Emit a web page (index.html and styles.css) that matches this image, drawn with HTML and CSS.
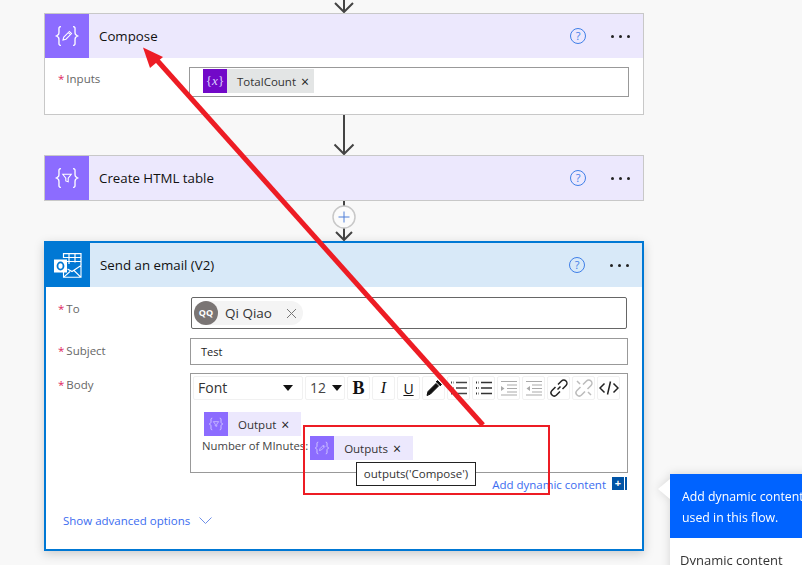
FILE: index.html
```html
<!DOCTYPE html>
<html lang="en">

<head>
    <meta charset="UTF-8">
    <meta name="viewport" content="width=device-width, initial-scale=1.0">
    <title>Flow editor</title>
    <link rel="stylesheet" href="styles.css">
</head>

<body>
    <svg class="defs" width="0" height="0">
        <symbol id="braces" viewBox="0 0 24 24">
            <path d="M7.500 5C5.500 5 6 6.500 6 8.500S6 11 4 12C6 13 6 13.500 6 15.500S5.500 19 7.500 19M16.500 5C18.500 5 18 6.500 18 8.500S18 11 20 12C18 13 18 13.500 18 15.500S18.500 19 16.500 19" fill="none" stroke="currentColor" stroke-width="1" />
        </symbol>
        <symbol id="pencil" viewBox="0 0 24 24">
            <path d="M9 15L9.600 12.800L13.800 8.600L15.400 10.200L11.200 14.400ZM13 9.400L14.600 11" fill="none" stroke="currentColor" stroke-width="0.800" />
        </symbol>
        <symbol id="funnel" viewBox="0 0 24 24">
            <path d="M8.800 9.200H15.200L12.900 12.200V14.800L11.100 14.200V12.200Z" fill="none" stroke="currentColor" stroke-width="0.800" />
        </symbol>
    </svg>

    <main class="flow">
        <svg class="link link-top" width="24" height="13" viewBox="0 0 24 13">
            <path d="M12 0V12M3 3L12 12L21 3" fill="none" stroke="#444" stroke-width="2" />
        </svg>

        <section class="step step-data">
            <header class="step-head">
                <div class="step-icon">
                    <svg width="32" height="32"><use href="#braces" /><use href="#pencil" /></svg>
                </div>
                <span class="step-title">Compose</span>
                <span class="help">?</span>
                <span class="more"><i></i><i></i><i></i></span>
            </header>
            <div class="step-body compose-body">
                <label class="field-label"><b>*</b>Inputs</label>
                <div class="inputs-box">
                    <span class="token token-var">
                        <span class="token-icon var-icon">{<em>x</em>}</span>
                        <span class="token-text">TotalCount</span>
                        <span class="token-x">&times;</span>
                    </span>
                </div>
            </div>
        </section>

        <svg class="link" width="24" height="40" viewBox="0 0 24 40">
            <path d="M12 0V39M2.500 29.500L12 39L21.500 29.500" fill="none" stroke="#444" stroke-width="2" />
        </svg>

        <section class="step step-data">
            <header class="step-head">
                <div class="step-icon">
                    <svg width="32" height="32"><use href="#braces" /><use href="#funnel" /></svg>
                </div>
                <span class="step-title">Create HTML table</span>
                <span class="help">?</span>
                <span class="more"><i></i><i></i><i></i></span>
            </header>
        </section>

        <svg class="link" width="26" height="40" viewBox="0 0 26 40">
            <path d="M13 0V39M5 31L13 39L21 31" fill="none" stroke="#444" stroke-width="2" />
            <circle cx="13" cy="16" r="11" fill="#fbfbfb" stroke="#c8c8c8" stroke-width="1.500" />
            <path d="M13 10.500V21.500M7.500 16H18.500" stroke="#4f7fd8" stroke-width="1" />
        </svg>

        <section class="step step-mail">
            <header class="step-head">
                <div class="step-icon">
                    <svg width="28" height="25" viewBox="0 0 28 25" fill="none" stroke="#fff">
                        <path d="M9.500 5V0.700H27V12M15 0.700V11M21 0.700V9.500M9.500 4.500H27M9.500 8.500H27" stroke-width="1.200" />
                        <path d="M9.500 19V24.300H27V12.500L18 18.500L13.500 16M9.500 24.300L16 18.500M27 24.300L20 17.500" stroke-width="1.100" />
                        <rect x="0" y="6.500" width="13" height="13" fill="#fff" stroke="none" />
                        <ellipse cx="6.500" cy="13" rx="3" ry="3.600" stroke="#0078d4" stroke-width="1.800" />
                    </svg>
                </div>
                <span class="step-title">Send an email (V2)</span>
                <span class="help">?</span>
                <span class="more"><i></i><i></i><i></i></span>
            </header>
            <div class="step-body mail-body">
                <div class="row row-to">
                    <label class="field-label"><b>*</b>To</label>
                    <div class="to-box">
                        <span class="person">
                            <span class="avatar">QQ</span>
                            <span class="person-name">Qi Qiao</span>
                            <svg width="11" height="11" viewBox="0 0 11 11"><path d="M1 1L10 10M10 1L1 10" stroke="#777" stroke-width="1" /></svg>
                        </span>
                    </div>
                </div>
                <div class="row row-subject">
                    <label class="field-label"><b>*</b>Subject</label>
                    <div class="subject-box">Test</div>
                </div>
                <div class="row row-body">
                    <label class="field-label"><b>*</b>Body</label>
                    <div class="editor">
                        <div class="toolbar">
                            <span class="tool select-font"><span class="select-text">Font</span><i class="caret"></i></span>
                            <span class="tool select-size"><span class="select-text">12</span><i class="caret"></i></span>
                            <span class="tool tool-b">B</span>
                            <span class="tool tool-i">I</span>
                            <span class="tool tool-u">U</span>
                            <span class="tool">
                                <svg width="18" height="18" viewBox="0 0 18 18"><path d="M2 16.500L3 12.500L11 4.500L13.500 7L5.500 15ZM11 3L12.500 1.500L16.500 5.500L15 7" fill="#111" stroke="#111" /></svg>
                            </span>
                            <span class="tool">
                                <svg width="18" height="18" viewBox="0 0 18 18"><path d="M6 3.500H17M6 9H17M6 14.500H17" stroke="#444" stroke-width="1.500" /><path d="M1 3.500H3.500M1 9H3.500M1 14.500H3.500" stroke="#444" stroke-width="2" stroke-dasharray="1 1" /></svg>
                            </span>
                            <span class="tool">
                                <svg width="18" height="18" viewBox="0 0 18 18"><path d="M6 3.500H17M6 9H17M6 14.500H17" stroke="#333" stroke-width="1.500" /><path d="M1 3.500H3.500M1 9H3.500M1 14.500H3.500" stroke="#333" stroke-width="2" stroke-dasharray="1 1" /></svg>
                            </span>
                            <span class="tool">
                                <svg width="18" height="18" viewBox="0 0 18 18"><path d="M1 2.500H17M7 6H17M7 9.500H17M7 13H17M1 16H17" stroke="#aaa" stroke-width="1.200" /><path d="M1 7L4.500 9.500L1 12Z" fill="#aaa" /></svg>
                            </span>
                            <span class="tool">
                                <svg width="18" height="18" viewBox="0 0 18 18"><path d="M1 2.500H17M7 6H17M7 9.500H17M7 13H17M1 16H17" stroke="#aaa" stroke-width="1.200" /><path d="M5 7L1.500 9.500L5 12Z" fill="#aaa" /></svg>
                            </span>
                            <span class="tool">
                                <svg width="20" height="20" viewBox="0 0 20 20"><path d="M8.500 11.500L11.500 8.500M9 6.500L12.500 3A3 3 0 0 1 17 7.500L13.500 11M11 13.500L7.500 17A3 3 0 0 1 3 12.500L6.500 9" fill="none" stroke="#222" stroke-width="1.500" /></svg>
                            </span>
                            <span class="tool">
                                <svg width="20" height="20" viewBox="0 0 20 20"><path d="M9 6.500L12.500 3A3 3 0 0 1 17 7.500L13.500 11M11 13.500L7.500 17A3 3 0 0 1 3 12.500L6.500 9M3 3L6 6M14 14L17 17" fill="none" stroke="#bbb" stroke-width="1.500" /></svg>
                            </span>
                            <span class="tool">
                                <svg width="20" height="16" viewBox="0 0 20 16"><path d="M5.500 3.500L1 8L5.500 12.500M14.500 3.500L19 8L14.500 12.500M11.500 1.500L8.500 14.500" fill="none" stroke="#222" stroke-width="1.500" /></svg>
                            </span>
                        </div>
                        <div class="editor-text">
                            <span class="token token-data">
                                <span class="token-icon">
                                    <svg width="20" height="20"><use href="#braces" /><use href="#funnel" /></svg>
                                </span>
                                <span class="token-text">Output</span>
                                <span class="token-x">&times;</span>
                            </span>
                            <div class="editor-line">
                                <span class="line-text">Number of MInutes:</span>
                                <span class="token token-data">
                                    <span class="token-icon">
                                        <svg width="20" height="20"><use href="#braces" /><use href="#pencil" /></svg>
                                    </span>
                                    <span class="token-text">Outputs</span>
                                    <span class="token-x">&times;</span>
                                </span>
                            </div>
                        </div>
                    </div>
                </div>
                <div class="dynamic-row">
                    <a class="dynamic-link">Add dynamic content</a>
                    <span class="dynamic-plus">+</span><span class="dynamic-bar"></span>
                </div>
                <div class="advanced">
                    <a class="advanced-link">Show advanced options</a>
                    <svg width="13" height="7" viewBox="0 0 13 7"><path d="M0.500 0.500L6.500 6.500L12.500 0.500" fill="none" stroke="#6f8fe8" stroke-width="1" /></svg>
                </div>
            </div>
        </section>
    </main>

    <aside class="dynamic-panel">
        <div class="panel-head">Add dynamic content from the apps and connectors<br>used in this flow.</div>
        <div class="panel-title">Dynamic content</div>
    </aside>

    <!-- annotations drawn over the screenshot -->
    <div class="tooltip">outputs('Compose')</div>
    <div class="red-box"></div>
    <svg class="red-arrow" width="802" height="565" viewBox="0 0 802 565">
        <path d="M483 425L155 58" fill="none" stroke="#ed1c24" stroke-width="5" />
        <path d="M143 47.500L163 57L150 68Z" fill="#ed1c24" />
    </svg>
</body>

</html>
```

FILE: styles.css
```css
html, body {
    margin: 0;
    height: 100%;
}

body {
    position: relative;
    width: 802px;
    height: 565px;
    overflow: hidden;
    background-color: #f8f8f8;
    font-family: "Open Sans", "Noto Sans", Arial, sans-serif;
    font-size: 12px;
    color: #333;
}

.defs {
    position: absolute;
}

.flow {
    display: flex;
    flex-direction: column;
    align-items: center;
    width: 600px;
    margin-left: 44px;
}

.link {
    display: block;
    flex: none;
}

.step {
    align-self: stretch;
    box-sizing: border-box;
    background: white;
}

.step-data {
    border: 1px solid #c8c8c8;
}

.step-mail {
    border: 2px solid #0078d4;
    box-shadow: 0 3px 10px rgba(0, 0, 0, 0.18);
}

.step-head {
    display: flex;
    align-items: center;
    height: 44px;
}

.step-data .step-head {
    background: #ece8fd;
}

.step-mail .step-head {
    background: #d8e9f8;
}

.step-icon {
    display: flex;
    align-items: center;
    justify-content: center;
    flex: none;
    width: 44px;
    height: 44px;
    color: white;
}

.step-data .step-icon {
    background: #8c6cff;
}

.step-mail .step-icon {
    background: #0078d4;
}

.step-title {
    flex: 1;
    margin-left: 10px;
    font-size: 13.300px;
    color: #111;
}

.help {
    width: 14px;
    height: 14px;
    margin-right: 25px;
    border: 1px solid #3f7fe8;
    border-radius: 50%;
    font-size: 11px;
    line-height: 14px;
    text-align: center;
    color: #3f7fe8;
}

.more {
    display: flex;
    gap: 5px;
    margin-right: 13px;
}

.more i {
    width: 3px;
    height: 3px;
    border-radius: 50%;
    background: #222;
}

.field-label {
    display: block;
    font-size: 11.500px;
    color: #666;
}

.field-label b {
    margin-right: 2px;
    font-weight: normal;
    color: #e0245e;
}

.compose-body {
    display: flex;
    height: 56px;
    padding-left: 13px;
}

.compose-body .field-label {
    width: 131px;
    margin-top: 13px;
}

.inputs-box {
    box-sizing: border-box;
    width: 440px;
    height: 30px;
    margin-top: 9px;
    padding: 1px 13px;
    border: 1px solid #999;
}

.token {
    display: inline-flex;
    align-items: center;
    height: 24px;
    vertical-align: top;
}

.token-var {
    background: #e3e5e5;
}

.token-data {
    background: #ece8fd;
}

.token-icon {
    display: flex;
    align-items: center;
    justify-content: center;
    width: 24px;
    height: 24px;
    color: #dcd4ff;
    background: #8c6cff;
}

.var-icon {
    background: #7209c8;
    font-family: "Liberation Serif", serif;
    font-size: 13px;
}

.token-text {
    margin-left: 10px;
    font-size: 11.500px;
}

.token-x {
    margin: 1px 5px 0 5px;
    font-size: 14px;
    line-height: 1;
    color: #222;
}

.token-data .token-x {
    margin-right: 12px;
}

.mail-body {
    position: relative;
    height: 262px;
}

.row {
    display: flex;
    padding-left: 12px;
}

.row-to {
    padding-top: 10px;
}

.row-to .field-label {
    width: 133px;
    margin-top: 4px;
}

.to-box {
    box-sizing: border-box;
    width: 436px;
    height: 32px;
    padding: 3px 2px;
    border: 1px solid #666;
    border-radius: 2px;
}

.person {
    display: inline-flex;
    align-items: center;
    height: 24px;
    padding-right: 6px;
    border-radius: 12px;
    background: #f4f4f4;
}

.avatar {
    width: 24px;
    height: 24px;
    border-radius: 50%;
    background: #7a7574;
    color: white;
    font-size: 9px;
    font-weight: bold;
    line-height: 24px;
    text-align: center;
}

.person-name {
    margin: 0 14px 0 7px;
    font-size: 13.500px;
}

.row-subject {
    padding-top: 9px;
}

.row-subject .field-label {
    width: 132px;
    margin-top: 5px;
}

.subject-box {
    box-sizing: border-box;
    width: 438px;
    height: 27px;
    padding: 5px 10px;
    border: 1px solid #999;
    font-size: 11px;
    color: #222;
}

.row-body {
    padding-top: 8px;
}

.row-body .field-label {
    width: 132px;
    margin-top: 4px;
}

.editor {
    box-sizing: border-box;
    width: 438px;
    height: 100px;
    border: 1px solid #999;
}

.toolbar {
    display: flex;
    gap: 2px;
    padding: 2px 2px 0 2px;
}

.tool {
    display: flex;
    align-items: center;
    justify-content: center;
    box-sizing: border-box;
    width: 23px;
    height: 24px;
    border: 1px solid #f1f1f1;
    border-radius: 2px;
    color: #111;
}

.select-font {
    justify-content: space-between;
    width: 110px;
    padding: 0 9px 0 4px;
    font-size: 14px;
    color: #333;
}

.select-size {
    justify-content: space-between;
    width: 40px;
    padding: 0 2px 0 4px;
    font-size: 14px;
    color: #444;
}

.select-text {
    margin-top: -2px;
}

.caret {
    width: 0;
    height: 0;
    border-left: 5px solid transparent;
    border-right: 5px solid transparent;
    border-top: 6px solid #111;
}

.tool-b {
    font-family: "Liberation Serif", serif;
    font-size: 18px;
    font-weight: bold;
}

.tool-i {
    font-family: "Liberation Serif", serif;
    font-size: 16px;
    font-style: italic;
}

.tool-u {
    font-size: 14px;
    text-decoration: underline;
}

.editor-text {
    padding: 12px 0 0 13px;
}

.editor-line {
    display: flex;
    margin-left: -2px;
}

.line-text {
    margin-top: 1px;
    margin-right: 2px;
    font-size: 11.300px;
    line-height: 17px;
    color: #444;
}

.dynamic-row {
    display: flex;
    align-items: center;
    justify-content: flex-end;
    height: 13px;
    padding: 4px 15px 0 0;
}

.dynamic-link {
    margin-top: 2px;
    margin-right: 6px;
    font-size: 11.500px;
    color: #3b6cf0;
}

.dynamic-plus {
    width: 12px;
    height: 13px;
    background: #0054a6;
    color: white;
    font-size: 11px;
    font-weight: bold;
    line-height: 12px;
    text-align: center;
}

.dynamic-bar {
    width: 2px;
    height: 13px;
    margin-left: 1px;
    background: #0054a6;
}

.advanced {
    display: flex;
    align-items: center;
    gap: 9px;
    padding: 23px 0 0 17px;
}

.advanced-link {
    font-size: 11.500px;
    color: #3b6cf0;
}

/* floats over the canvas, cut by the window edge */
.dynamic-panel {
    position: absolute;
    left: 670px;
    top: 474px;
    width: 400px;
    height: 120px;
    background: white;
    filter: drop-shadow(0 0 5px rgba(0, 0, 0, 0.14));
}

.dynamic-panel::before {
    content: "";
    position: absolute;
    left: -12px;
    top: 5px;
    border-top: 10px solid transparent;
    border-bottom: 10px solid transparent;
    border-right: 12px solid white;
}

.panel-head {
    box-sizing: border-box;
    height: 64px;
    padding: 12px 12px;
    background: #0063ff;
    color: white;
    font-size: 12.300px;
    line-height: 21px;
    white-space: nowrap;
}

.panel-title {
    padding: 13px 10px;
    font-size: 13px;
    color: #333;
}

.tooltip {
    position: absolute;
    left: 356px;
    top: 462px;
    box-sizing: border-box;
    width: 120px;
    height: 24px;
    border: 1px solid #222;
    background: white;
    font-size: 11.500px;
    line-height: 22px;
    text-align: center;
    color: #333;
}

.red-box {
    position: absolute;
    left: 303px;
    top: 425px;
    box-sizing: border-box;
    width: 247px;
    height: 70px;
    border: 2px solid #ed1c24;
}

.red-arrow {
    position: absolute;
    left: 0;
    top: 0;
}
```
